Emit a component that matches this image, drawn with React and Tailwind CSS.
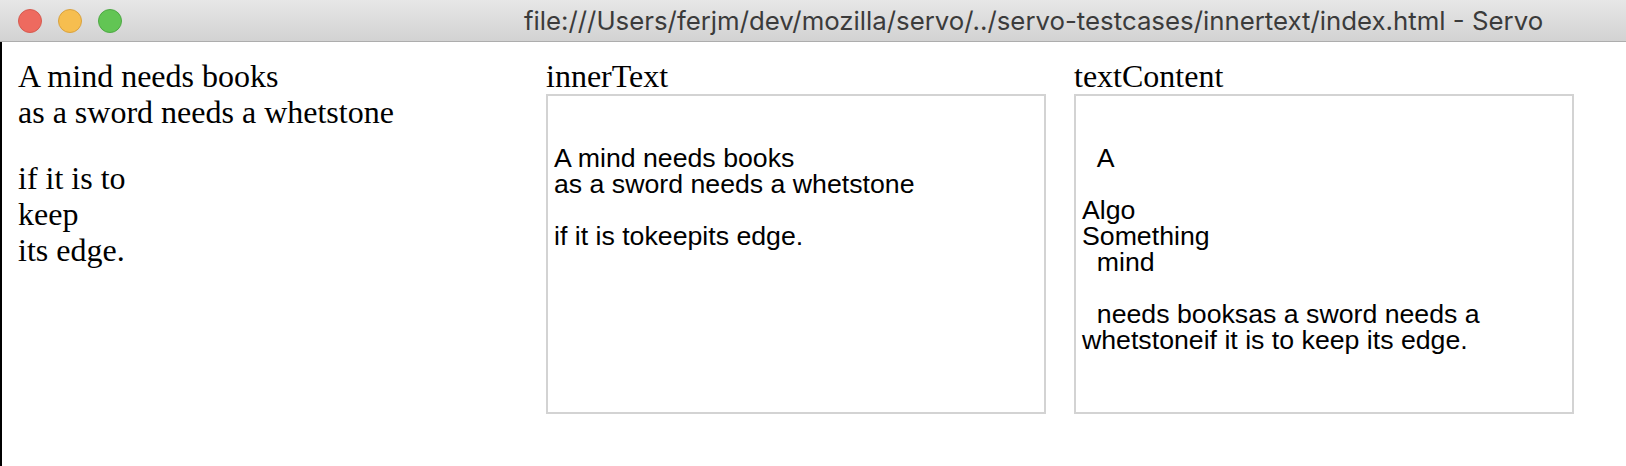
import React from 'react';

const serif = { fontFamily: '"Liberation Serif", "Times New Roman", serif' };

const INNER_TEXT = '\nA mind needs books\nas a sword needs a whetstone\n\nif it is tokeepits edge.';
const TEXT_CONTENT = '\n  A\n\nAlgo\nSomething\n  mind\n\n  needs booksas a sword needs a whetstoneif it is to keep its edge.';

const TrafficLights = () => (
  <div className="flex items-center gap-[16px] ml-[18px]">
    <span className="w-[24px] h-[24px] rounded-full bg-[#ee6a5f] border border-[#d65b50]" />
    <span className="w-[24px] h-[24px] rounded-full bg-[#f6be4f] border border-[#d9a23f]" />
    <span className="w-[24px] h-[24px] rounded-full bg-[#62c554] border border-[#4ea944]" />
  </div>
);

const OutputBox = ({ title, text }) => (
  <div className="w-[500px]">
    <div className="text-[32px] leading-[36px] text-black">{title}</div>
    <div className="h-[320px] border-2 border-[#d3d3d3] px-[6px] pt-[23px] overflow-hidden">
      <div className="font-['Liberation_Sans',Arial,sans-serif] text-[26.7px] leading-[26px] text-black whitespace-pre-wrap">
        {text}
      </div>
    </div>
  </div>
);

export default function App() {
  return (
    <div className="w-[1626px] h-[466px] bg-white overflow-hidden">
      <div className="h-[42px] flex items-center bg-gradient-to-b from-[#e7e7e7] to-[#d2d2d2] border-b border-[#adadad]">
        <TrafficLights />
        <span className="ml-[402px] font-['Inter','Liberation_Sans',sans-serif] text-[25.8px] leading-none text-[#3b3b3b] whitespace-nowrap">
          file:///Users/ferjm/dev/mozilla/servo/../servo-testcases/innertext/index.html - Servo
        </span>
      </div>
      <div className="flex h-[424px]">
        <div className="w-[2px] bg-black" />
        <div className="flex pt-[16px] pl-[16px]" style={serif}>
          <div className="w-[528px] text-[32px] leading-[36px] text-black">
            <div>A mind needs books</div>
            <div>as a sword needs a whetstone</div>
            <div className="h-[30px]" />
            <div>if it is to</div>
            <div>keep</div>
            <div>its edge.</div>
          </div>
          <div className="flex gap-[28px]">
            <OutputBox title="innerText" text={INNER_TEXT} />
            <OutputBox title="textContent" text={TEXT_CONTENT} />
          </div>
        </div>
      </div>
    </div>
  );
}
